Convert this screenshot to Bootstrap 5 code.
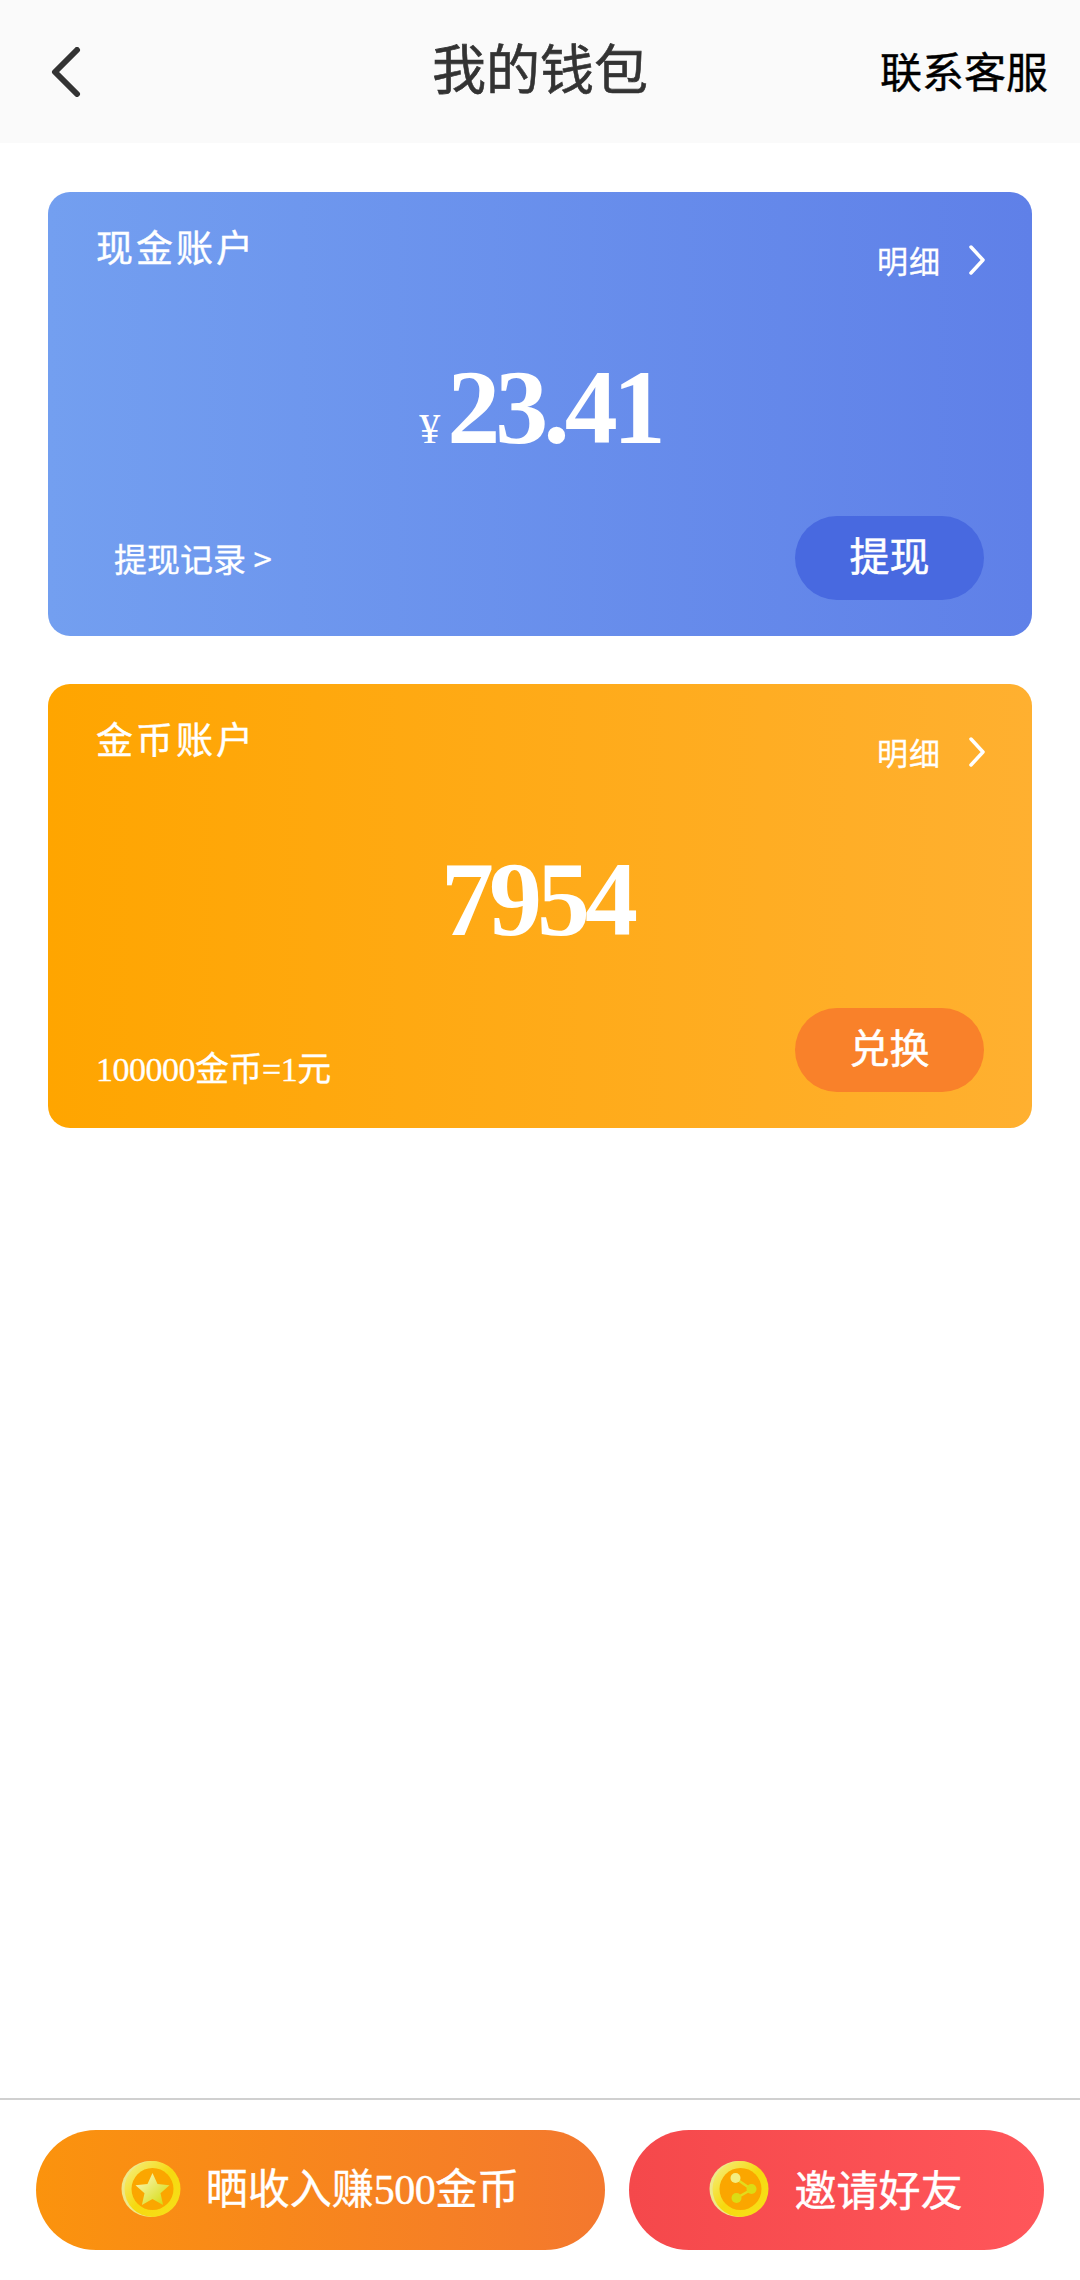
<!DOCTYPE html>
<html lang="zh">
<head>
<meta charset="utf-8">
<title>我的钱包</title>
<link href="https://cdn.jsdelivr.net/npm/bootstrap@5.3.0/dist/css/bootstrap.min.css" rel="stylesheet">
<style>
html,body{margin:0;background:#fff}
body{font-family:"Noto Sans CJK SC","Liberation Sans",sans-serif;}
.wallet-page{min-height:2280px;width:1080px}
.top-bar{height:143px;background:#fafafa;padding:0 32px 0 50px}
.top-side{width:280px}
.top-title{font-size:54px;line-height:1;color:#333;padding-bottom:10px;margin-right:18px;font-weight:400;-webkit-text-stroke:.6px #333}
.top-link{font-size:42px;line-height:1;color:#000;white-space:nowrap;font-weight:400;-webkit-text-stroke:.4px #000;padding-bottom:4px}
.account-list{padding:49px 48px 0;gap:48px}
.account{height:444px;border:0;border-radius:22px;color:#fff;padding:0 48px 0 48px}
.account-blue{background:linear-gradient(90deg,#739ff0,#5f80e8)}
.account-gold{background:linear-gradient(90deg,#ffa500,#ffb030)}
.acc-head{height:130px}
.acc-name{font-size:37px;line-height:1;padding-top:36px;letter-spacing:3px;-webkit-text-stroke:.4px #fff}
.acc-more{font-size:31px;line-height:1;padding-top:52px;gap:27px;margin-right:-2px;letter-spacing:1px;-webkit-text-stroke:.3px #fff}
.acc-amount{height:105px;font-family:"Liberation Serif",serif;font-weight:700;line-height:1;font-size:106px;letter-spacing:-5px;margin-top:33px}
.acc-amount-coins{padding-right:6px}
.acc-yen{font-size:42px;letter-spacing:0;font-weight:400;margin-right:7px}
.acc-foot{margin-top:56px}
.acc-note{line-height:1;-webkit-text-stroke:.3px #fff}
.acc-note-link{font-size:33px;padding:0 0 25px 18px;white-space:nowrap}
.acc-note-rate{font-size:34px;padding-bottom:5px;font-family:"Liberation Serif","Noto Sans CJK SC",serif;letter-spacing:-.5px}
.acc-btn{width:189px;height:84px;border-radius:42px;font-size:40px;line-height:1;color:#fff;border:0;padding:0 0 8px;-webkit-text-stroke:.5px #fff}
.btn-deep{background:#4869e0}
.btn-orange{background:#f9812a}
.bottom-bar{margin-top:auto;border-top:2px solid #d0d0d0;padding:30px 36px 30px;gap:24px}
.share-btn{height:120px;border-radius:60px;border:0;color:#fff;font-size:42px;line-height:1;gap:24px;padding:0 0 4px;-webkit-text-stroke:.4px #fff}
.share-earn{width:569px;background:linear-gradient(90deg,#fb930d,#f4782e)}
.share-invite{width:415px;background:linear-gradient(90deg,#f5484b,#ff565a)}
.num-inline{font-family:"Liberation Serif",serif;letter-spacing:-.5px}
.coin{width:61px;height:60px;flex:none;margin:4px 0 0 -1px}
</style>
</head>
<body>
<div class="wallet-page d-flex flex-column">
  <header class="top-bar d-flex align-items-center justify-content-between">
    <div class="top-side d-flex align-items-center">
      <svg width="32" height="50" viewBox="0 0 32 50" aria-hidden="true"><path d="M27 3 5 25l22 22" fill="none" stroke="#333" stroke-width="6" stroke-linecap="round" stroke-linejoin="round"/></svg>
    </div>
    <div class="top-title">我的钱包</div>
    <div class="top-side text-end top-link">联系客服</div>
  </header>

  <main class="account-list d-flex flex-column">
    <section class="card account account-blue">
      <div class="acc-head d-flex justify-content-between align-items-start">
        <div class="acc-name">现金账户</div>
        <div class="acc-more d-flex align-items-center">明细
          <svg width="18" height="30" viewBox="0 0 18 30" aria-hidden="true"><path d="M3 2l12 13L3 28" fill="none" stroke="#fff" stroke-width="3.500" stroke-linecap="round" stroke-linejoin="round"/></svg>
        </div>
      </div>
      <div class="acc-amount text-center"><span class="acc-yen">¥</span>23.41</div>
      <div class="acc-foot d-flex justify-content-between align-items-end">
        <div class="acc-note acc-note-link">提现记录 &gt;</div>
        <button type="button" class="btn acc-btn btn-deep">提现</button>
      </div>
    </section>

    <section class="card account account-gold">
      <div class="acc-head d-flex justify-content-between align-items-start">
        <div class="acc-name">金币账户</div>
        <div class="acc-more d-flex align-items-center">明细
          <svg width="18" height="30" viewBox="0 0 18 30" aria-hidden="true"><path d="M3 2l12 13L3 28" fill="none" stroke="#fff" stroke-width="3.500" stroke-linecap="round" stroke-linejoin="round"/></svg>
        </div>
      </div>
      <div class="acc-amount acc-amount-coins text-center">7954</div>
      <div class="acc-foot d-flex justify-content-between align-items-end">
        <div class="acc-note acc-note-rate">100000金币=1元</div>
        <button type="button" class="btn acc-btn btn-orange">兑换</button>
      </div>
    </section>
  </main>

  <footer class="bottom-bar d-flex">
    <button type="button" class="btn share-earn share-btn d-flex align-items-center justify-content-center">
      <svg class="coin" viewBox="0 0 60 60" aria-hidden="true">
        <defs>
          <linearGradient id="rimA" x1="0" y1="0" x2="1" y2="1"><stop offset="0" stop-color="#f4f08a"/><stop offset=".5" stop-color="#f6d90f"/><stop offset="1" stop-color="#f7e01a"/></linearGradient>
          <linearGradient id="starA" x1="0" y1="0" x2="1" y2="1"><stop offset="0" stop-color="#fff9c8"/><stop offset="1" stop-color="#d2d900"/></linearGradient>
        </defs>
        <ellipse cx="29" cy="29" rx="29" ry="28" fill="#eee88a"/>
        <circle cx="31" cy="29" r="28" fill="url(#rimA)"/>
        <circle cx="31" cy="29" r="21" fill="#fba600"/>
        <path d="M31 13l5 11 12 1.300-9 8 2.600 11.700L31 39l-10.600 6 2.600-11.700-9-8L26 24z" fill="url(#starA)"/>
      </svg>
      <span>晒收入赚<span class="num-inline">500</span>金币</span>
    </button>
    <button type="button" class="btn share-invite share-btn d-flex align-items-center justify-content-center">
      <svg class="coin" viewBox="0 0 60 60" aria-hidden="true">
        <ellipse cx="29" cy="29" rx="29" ry="28" fill="#eee88a"/>
        <circle cx="31" cy="29" r="28" fill="url(#rimA)"/>
        <circle cx="31" cy="29" r="21" fill="#fba600"/>
        <path d="M27 19l15 10.500L27 38" fill="none" stroke="#e3dc1c" stroke-width="2.500"/>
        <circle cx="26" cy="18" r="5" fill="#f4ee80"/>
        <circle cx="42" cy="29" r="5" fill="#dcdc14"/>
        <circle cx="27" cy="38" r="5" fill="#dcdc14"/>
      </svg>
      <span>邀请好友</span>
    </button>
  </footer>
</div>
<script src="https://cdn.jsdelivr.net/npm/bootstrap@5.3.0/dist/js/bootstrap.bundle.min.js"></script>
</body>
</html>
